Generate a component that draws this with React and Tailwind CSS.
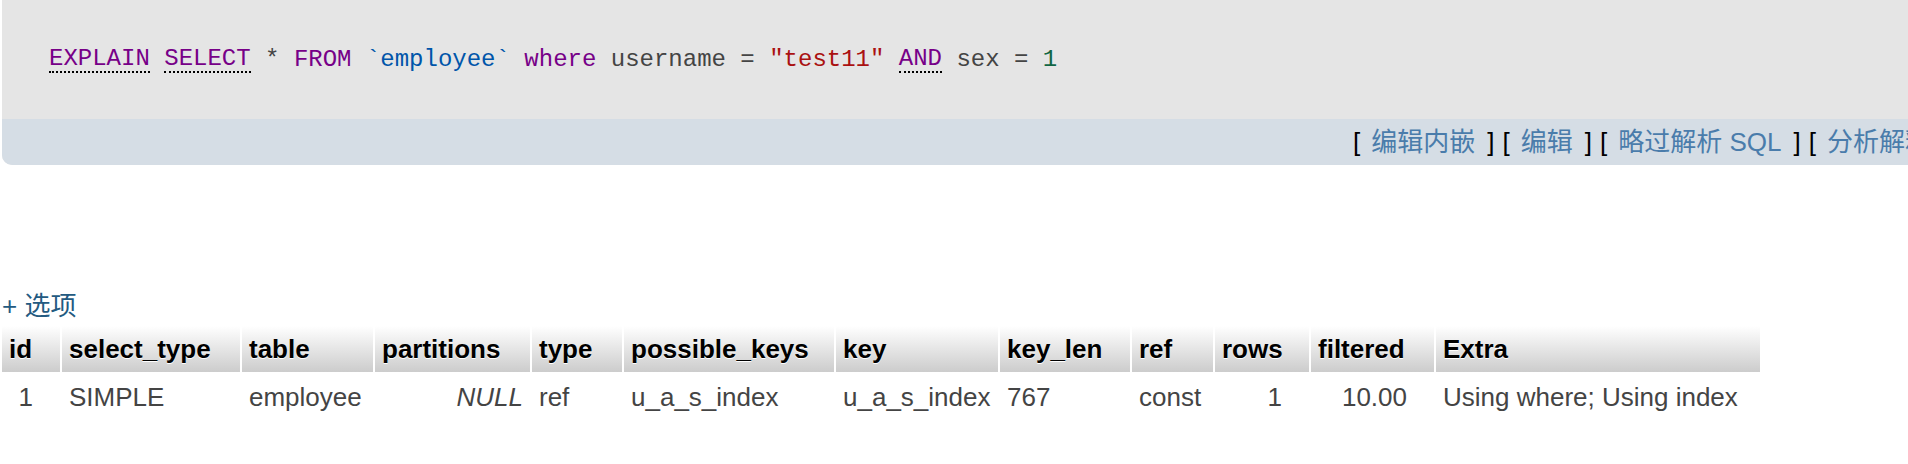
const COLUMNS = [
  { name: "id", w: "w-[58px]" },
  { name: "select_type", w: "w-[178px]" },
  { name: "table", w: "w-[131px]" },
  { name: "partitions", w: "w-[155px]" },
  { name: "type", w: "w-[90px]" },
  { name: "possible_keys", w: "w-[210px]" },
  { name: "key", w: "w-[162px]" },
  { name: "key_len", w: "w-[130px]" },
  { name: "ref", w: "w-[81px]" },
  { name: "rows", w: "w-[94px]" },
  { name: "filtered", w: "w-[123px]" },
  { name: "Extra", w: "w-[324px]" },
];

function Kw({ children, link }) {
  return (
    <span
      className={
        link
          ? "text-[#770088] border-b-2 border-dotted border-black"
          : "text-[#770088]"
      }
    >
      {children}
    </span>
  );
}

function Action({ label }) {
  return (
    <span className="shrink-0 text-black">
      [<span className="ml-[11px] mr-[12px] text-[#4a7cab]">{label}</span>]
    </span>
  );
}

export default function App() {
  const cell = "h-[46px] px-[7px] text-left align-middle";
  const num = "h-[46px] pr-[27px] pl-[7px] text-right align-middle";

  return (
    <div className="min-h-[464px] w-full overflow-hidden bg-white font-['Liberation_Sans','Noto_Sans_CJK_SC',sans-serif]">
      {/* query box */}
      <div className="ml-[2px] w-[2400px] rounded-bl-[10px] bg-[#e5e5e5]">
        <div className="flex h-[119px] items-center pl-[47px] whitespace-nowrap font-['Liberation_Mono',monospace] text-[24px] leading-none text-[#444]">
          <Kw link>EXPLAIN</Kw>&nbsp;<Kw link>SELECT</Kw>&nbsp;*&nbsp;
          <Kw>FROM</Kw>&nbsp;<span className="text-[#0055aa]">`employee`</span>
          &nbsp;<Kw>where</Kw>&nbsp;username&nbsp;=&nbsp;
          <span className="text-[#aa1111]">"test11"</span>&nbsp;
          <Kw link>AND</Kw>&nbsp;sex&nbsp;=&nbsp;
          <span className="text-[#116644]">1</span>
        </div>
        <div className="flex h-[46px] items-center gap-[8px] rounded-bl-[10px] bg-[#d5dde5] pl-[1351px] whitespace-nowrap text-[26px]">
          <Action label="编辑内嵌" />
          <Action label="编辑" />
          <Action label="略过解析 SQL" />
          <Action label="分析解释于 MariaDB.org" />
          <Action label="创建 PHP 代码" />
          <Action label="刷新" />
        </div>
      </div>

      {/* results */}
      <div className="mt-[123px] h-[36px] pl-[2px] text-[26px] leading-[36px] text-[#235a81]">
        + 选项
      </div>
      <table className="w-[1762px] table-fixed border-separate border-spacing-[2px] text-[26px]">
        <thead>
          <tr>
            {COLUMNS.map((c) => (
              <th
                key={c.name}
                className={`${c.w} ${cell} bg-linear-to-b from-white to-[#cccccc] font-bold text-black [text-shadow:0_1px_0_#fff]`}
              >
                {c.name}
              </th>
            ))}
          </tr>
        </thead>
        <tbody className="text-[#444]">
          <tr>
            <td className={num}>1</td>
            <td className={cell}>SIMPLE</td>
            <td className={cell}>employee</td>
            <td className={`${cell} text-right italic`}>NULL</td>
            <td className={cell}>ref</td>
            <td className={cell}>u_a_s_index</td>
            <td className={cell}>u_a_s_index</td>
            <td className={cell}>767</td>
            <td className={cell}>const</td>
            <td className={num}>1</td>
            <td className={num}>10.00</td>
            <td className={cell}>Using where; Using index</td>
          </tr>
        </tbody>
      </table>
    </div>
  );
}
